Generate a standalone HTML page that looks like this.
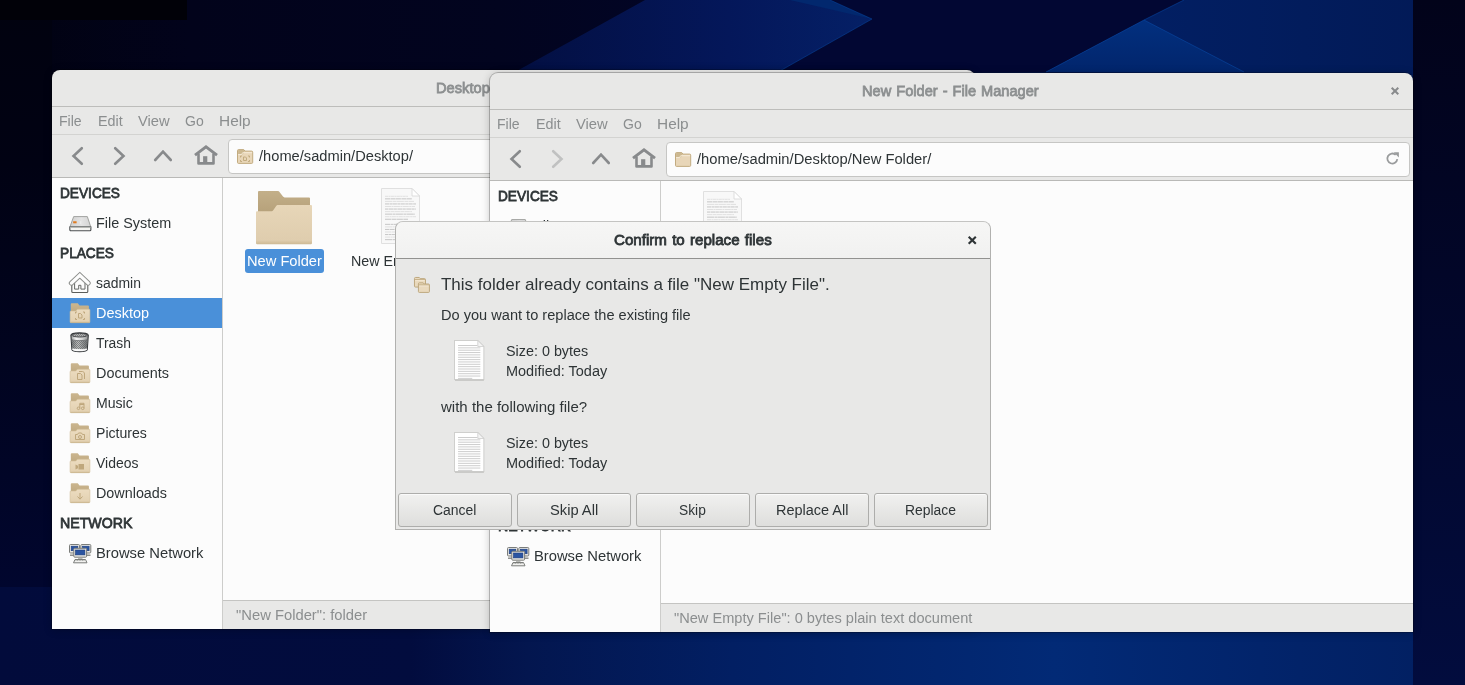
<!DOCTYPE html>
<html lang="en">
<head>
<meta charset="utf-8">
<title>File Manager</title>
<style>
*{box-sizing:border-box;margin:0;padding:0}
html,body{width:1465px;height:685px;overflow:hidden;background:#010733}
body{position:relative;font-family:"Liberation Sans","DejaVu Sans",sans-serif;font-size:15.5px;color:#2e3436}
#bg{position:absolute;left:0;top:0;width:1465px;height:685px}
.t{position:absolute;white-space:nowrap;line-height:20px;transform-origin:0 50%;font-size:15.5px}
.t.b{font-weight:normal;-webkit-text-stroke:.8px currentColor;word-spacing:1px}
.t.g{color:#8b8e8f}
.t.b.g{color:#8c8f90}
.t.w{color:#fff}
.win{will-change:transform;position:absolute;width:923px;height:559px;background:#e8e8e7;border-radius:8px 8px 0 0;overflow:hidden;box-shadow:0 0 0 1px rgba(0,0,0,.22),0 1px 9px rgba(0,0,0,.24)}
.win .title{position:absolute;left:0;top:0;width:100%;height:37px;border-bottom:1px solid #bdbdbb}
.menubar{position:absolute;left:0;top:37px;width:100%;height:28px;border-bottom:1px solid #d3d3d1}
.toolbar{position:absolute;left:0;top:65px;width:100%;height:43px;border-bottom:1px solid #b9b9b7}
.entry{position:absolute;left:176px;top:4px;height:35px;background:#fcfcfc;border:1px solid #c6c6c4;border-radius:4px}
.side{position:absolute;left:0;top:108px;width:171px;bottom:0;background:#fcfcfc;border-right:1px solid #cdcdcb}
.row{position:absolute;left:0;width:170px;height:30px}
.row.sel{background:#4a90d9}
.pane{position:absolute;left:171px;top:108px;right:0;bottom:29px;background:#fcfcfc}
.lblsel{position:absolute;background:#4a90d9;border-radius:3px}
.status{position:absolute;left:171px;right:0;bottom:0;height:29px;border-top:1px solid #c4c4c2;background:#e8e8e7}
.dlg{will-change:transform;position:absolute;left:395px;top:221px;width:596px;height:309px;background:#e8e8e7;border:1px solid #b1b1af;border-top-color:#c4c4c2;border-radius:8px 8px 0 0;overflow:hidden}
.dlg .dt{position:absolute;left:0;top:0;width:100%;height:37px;background:linear-gradient(#f6f6f5,#f1f1f0);border-bottom:1px solid #929290}
.btn{position:absolute;top:271px;width:114px;height:34px;border:1px solid #adadab;border-radius:3px;background:linear-gradient(#f1f1f0,#dededc);box-shadow:inset 0 1px #fafafa}

</style>
</head>
<body>
<svg id="bg" viewBox="0 0 1465 685">
<defs>
<linearGradient id="bgA" x1="0" y1="0" x2="1" y2="0"><stop offset="0" stop-color="#010211"/><stop offset=".13" stop-color="#02031b"/><stop offset=".34" stop-color="#02041f"/><stop offset=".6" stop-color="#02062c"/><stop offset=".78" stop-color="#021f63"/><stop offset="1" stop-color="#021955"/></linearGradient>
<linearGradient id="bgB" x1="0" y1="0" x2="1" y2="0"><stop offset="0" stop-color="#020b3b"/><stop offset=".28" stop-color="#020c3e"/><stop offset=".36" stop-color="#03164f"/><stop offset=".5" stop-color="#021f63"/><stop offset=".72" stop-color="#022a76"/><stop offset=".86" stop-color="#02246b"/><stop offset="1" stop-color="#021f60"/></linearGradient>
<linearGradient id="bgL" x1="0" y1="0" x2="0" y2="1"><stop offset="0" stop-color="#01020f"/><stop offset=".28" stop-color="#010213"/><stop offset=".6" stop-color="#01041f"/><stop offset="1" stop-color="#01062e"/></linearGradient>
<linearGradient id="bgR" x1="0" y1="0" x2="0" y2="1"><stop offset="0" stop-color="#02031a"/><stop offset=".4" stop-color="#020628"/><stop offset="1" stop-color="#020c3e"/></linearGradient>
<linearGradient id="bgM" x1="0" y1="0" x2="1" y2="0"><stop offset="0" stop-color="#030f42"/><stop offset=".6" stop-color="#04175a"/><stop offset="1" stop-color="#052066"/></linearGradient>
<linearGradient id="bgT" x1="0" y1="0" x2="0" y2="1"><stop offset="0" stop-color="#02307f"/><stop offset="1" stop-color="#02256c"/></linearGradient>
</defs>
<rect width="1465" height="340" fill="url(#bgA)"/>
<rect y="340" width="1465" height="345" fill="url(#bgB)"/>
<polygon points="645,0 830,0 872,19 778,72 515,72" fill="url(#bgM)"/>
<polygon points="790,0 830,0 872,19" fill="#02286e"/>
<polygon points="830,0 1184,0 1144,20 1046,72 778,72 872,19" fill="#020733"/>
<polygon points="1144,20 1244,72 1046,72" fill="url(#bgT)"/>
<path d="M872 19L778 72M1144 20L1046 72M1144 20L1244 72M1144 20L1184 0M872 19L830 0" stroke="#0a4aa8" stroke-width="1" fill="none" opacity=".55"/>
<rect x="0" y="0" width="52" height="587" fill="url(#bgL)"/>
<rect x="1413" y="0" width="52" height="685" fill="url(#bgR)"/>
<rect x="0" y="0" width="187" height="20" fill="#010108"/>
</svg>

<div class="win" id="w1" style="left:52px;top:70px">
<div class="title"><span class="t b g" id="t3" style="left:383.7px;top:8.0px;transform:scaleX(0.9470)">Desktop - File Manager</span><svg style="position:absolute;left:901px;top:14px;overflow:visible" width="8" height="8" viewBox="0 0 8 8" ><path d="M.7.700l6.6 6.6M7.3 .7l-6.6 6.6" stroke="#888a8c" stroke-width="2" fill="none"/></svg></div>
<div class="menubar"><span class="t g" id="t4" style="left:7.4px;top:4.0px;transform:scaleX(0.9086)">File</span><span class="t g" id="t5" style="left:46.4px;top:4.0px;transform:scaleX(0.9244)">Edit</span><span class="t g" id="t6" style="left:86.4px;top:4.0px;transform:scaleX(0.9511)">View</span><span class="t g" id="t7" style="left:133.4px;top:4.0px;transform:scaleX(0.9039)">Go</span><span class="t g" id="t8" style="left:167.4px;top:4.0px;transform:scaleX(0.9940)">Help</span></div>
<div class="toolbar">
<svg style="position:absolute;left:19px;top:11px;overflow:visible" width="14" height="20" viewBox="0 0 14 20" ><path d="M10.800 2.200l-8.300 7.800 8.300 7.800" fill="none" stroke="#888a8c" stroke-width="2.600" stroke-linecap="round" stroke-linejoin="miter"/></svg><svg style="position:absolute;left:59.5px;top:11px;overflow:visible" width="14" height="20" viewBox="0 0 14 20" ><path d="M3.200 2.200l8.300 7.800-8.300 7.800" fill="none" stroke="#888a8c" stroke-width="2.600" stroke-linecap="round" stroke-linejoin="miter"/></svg><svg style="position:absolute;left:101px;top:13.8px;overflow:visible" width="20" height="14" viewBox="0 0 20 14" ><path d="M2.200 11l7.800-8.300 7.800 8.300" fill="none" stroke="#888a8c" stroke-width="2.600" stroke-linecap="round" stroke-linejoin="miter"/></svg><svg style="position:absolute;left:141px;top:9px;overflow:visible" width="26" height="22" viewBox="0 0 26 22" ><path d="M2 11.200L13 2.900L24 11.200" fill="none" stroke="#888a8c" stroke-width="2.900" stroke-linecap="butt" stroke-linejoin="miter"/><path d="M5.500 9.500V19.400H20.500V9.500" fill="none" stroke="#888a8c" stroke-width="2.600" stroke-linejoin="round"/><rect x="10.100" y="12.200" width="4.200" height="7" fill="#888a8c"/></svg>
<div class="entry" style="width:760px"><svg style="position:absolute;left:7.7px;top:8.8px;overflow:visible" width="16.2" height="15.2" viewBox="0 0 16.200 15.200" ><path d="M1.500 .6h5.300l1.200 1.500h6.700a1 1 0 0 1 1 1v10.300a1 1 0 0 1-1 1h-13.200a1 1 0 0 1-1-1v-11.800a1 1 0 0 1 1-1z" fill="#e8d6b8" stroke="#c2ab80" stroke-width="1"/><path d="M1.100 1.100h5.500l1.100 1.500-1.800 2.700h-4.800z" fill="#ccb890"/><path d="M1.100 5.600h3.400l1.200-1.900h9.400" fill="none" stroke="#f7eedc" stroke-width=".9"/><g fill="none" stroke="#c2ab80" stroke-width="1"><path d="M3.500 8.500v-1.500h1.500M11 7h1.500v1.500M12.500 11v1.500h-1.500M5 12.500h-1.500v-1.500"/><path d="M6.500 8h2l1 1v2.500h-3z"/></g></svg></div>
<span class="t " id="t9" style="left:207.1px;top:11.0px;transform:scaleX(0.9458)">/home/sadmin/Desktop/</span>
</div>
<div class="side">
<div class="row" style="top:0px">
<span class="t b" id="t10" style="left:7.7px;top:5.0px;transform:scaleX(0.8815)">DEVICES</span>
</div>
<div class="row" style="top:30px">
<svg style="position:absolute;left:16.8px;top:7.7px;overflow:visible" width="22.7" height="15.4" viewBox="0 0 22.200 15.200" ><defs><linearGradient id="g1" x1="0" y1="0" x2="1" y2="0"><stop offset="0" stop-color="#cfcfcf"/><stop offset=".55" stop-color="#e4e4e4"/><stop offset="1" stop-color="#d4d4d4"/></linearGradient></defs>
<path d="M4.500.6h13.500l3.400 10.200h-20.600z" fill="url(#g1)" stroke="#9a9b98" stroke-width=".9"/>
<path d="M.7 10.800h20.800v2.800a1 1 0 0 1-1 1h-18.800a1 1 0 0 1-1-1z" fill="#f4f4f2" stroke="#4d5052" stroke-width="1.100"/>
<path d="M1 11.400h20.200" stroke="#b8b9b5" stroke-width="1"/>
<rect x="4" y="5.200" width="3.400" height="2" fill="#e07a1f"/>
<path d="M11.500 5v3" stroke="#f2f2f2" stroke-width=".8"/></svg>
<span class="t " id="t11" style="left:43.7px;top:5.0px;transform:scaleX(0.9288)">File System</span>
</div>
<div class="row" style="top:60px">
<span class="t b" id="t12" style="left:7.7px;top:5.0px;transform:scaleX(0.8828)">PLACES</span>
</div>
<div class="row" style="top:90px">
<svg style="position:absolute;left:16.8px;top:3.7px;overflow:visible" width="21.6" height="21.5" viewBox="0 0 21.600 21.500" ><path d="M2.800 10.500V19.500a1 1 0 0 0 1 1H17.800a1 1 0 0 0 1-1V10.500" fill="#fbfbfb" stroke="#5b5d5a" stroke-width="1.100"/>
<path d="M5.600 11V17.100H9.700V13.300H11.900V17.100H16V11" fill="#fcfcfc" stroke="#666865" stroke-width="1"/>
<path d="M2.400 11.100L10.800 3.300L19.200 11.100" fill="none" stroke="#8d8f8c" stroke-width="5.200" stroke-linecap="round" stroke-linejoin="miter"/>
<path d="M2.400 11.100L10.800 3.300L19.200 11.100" fill="none" stroke="#fdfdfd" stroke-width="3.200" stroke-linecap="round" stroke-linejoin="miter"/></svg>
<span class="t " id="t13" style="left:43.7px;top:5.0px;transform:scaleX(0.8986)">sadmin</span>
</div>
<div class="row sel" style="top:120px">
<svg style="position:absolute;left:18px;top:5px;overflow:visible" width="20" height="20" viewBox="0 0 20 20" ><defs><linearGradient id="g2" x1="0" y1="0" x2="0" y2="1"><stop offset="0" stop-color="#cbb68f"/><stop offset="1" stop-color="#bba57c"/></linearGradient>
<linearGradient id="g3" x1="0" y1="0" x2="0" y2="1"><stop offset="0" stop-color="#ecdcc0"/><stop offset="1" stop-color="#e2d0b0"/></linearGradient></defs>
<path d="M1.700 .3h6.100l1.700 2.100h8.500a.9.900 0 0 1 .9.900v9h-18.100v-11.100a.9.900 0 0 1 .9-.9z" fill="url(#g2)"/>
<path d="M.9 8h4.900l1.600-1.800h11.700a.8.800 0 0 1 .8.800v11.900a.8.800 0 0 1-.8.800h-18.200a.8.800 0 0 1-.8-.8v-10.100a.8.800 0 0 1 .8-.8z" fill="url(#g3)" stroke="#d2bd97" stroke-width=".6"/>
<path d="M.6 19.300h18.800" stroke="#c9b48c" stroke-width=".9"/>
<g fill="none" stroke="#bfa77c" stroke-width="1"><path d="M5.5 10.5v-1.5h1.5M13 9h1.5v1.5M14.500 15v1.500h-1.5M7 16.500h-1.5v-1.5" stroke-dasharray="none"/><path d="M8.5 10.500h2l1.500 1.500v3h-3.500z"/></g></svg>
<span class="t w" id="t14" style="left:43.7px;top:5.0px;transform:scaleX(0.9319)">Desktop</span>
</div>
<div class="row" style="top:150px">
<svg style="position:absolute;left:18px;top:4px;overflow:visible" width="19.2" height="20.5" viewBox="0 0 19 20.500" ><defs><linearGradient id="g4" x1="0" y1="0" x2="1" y2="0"><stop offset="0" stop-color="#9a9c9c"/><stop offset=".3" stop-color="#f4f4f4"/><stop offset=".65" stop-color="#d4d5d5"/><stop offset="1" stop-color="#8a8c8c"/></linearGradient>
<linearGradient id="g6" x1="0" y1="0" x2="1" y2="0"><stop offset="0" stop-color="#777a7b"/><stop offset=".4" stop-color="#c9caca"/><stop offset="1" stop-color="#6f7273"/></linearGradient>
<pattern id="p5" width="2" height="2" patternUnits="userSpaceOnUse"><rect width="1" height="1" fill="#5d6061" fill-opacity=".75"/><rect x="1" y="1" width="1" height="1" fill="#5d6061" fill-opacity=".75"/></pattern></defs>
<path d="M.8 3.200c0-3.300 17.400-3.300 17.400 0l-1 14.300c-.3 3-15.100 3-15.400 0z" fill="url(#g4)" stroke="#34373a" stroke-width="1.100"/>
<path d="M1.600 8c3.200 1.200 12.600 1.200 15.800 0l-.6 8c-3 1.300-11.600 1.300-14.600 0z" fill="url(#g6)"/>
<path d="M1.600 8c3.200 1.200 12.600 1.200 15.800 0l-.6 8c-3 1.300-11.600 1.300-14.600 0z" fill="url(#p5)"/>
<ellipse cx="9.500" cy="3.200" rx="7.700" ry="1.800" fill="#b9baba" stroke="#34373a" stroke-width=".9"/>
<ellipse cx="9.500" cy="3.200" rx="7.300" ry="1.500" fill="url(#p5)"/>
<path d="M1.500 7.600c3.200 1.300 12.800 1.300 16 0" fill="none" stroke="#55585a" stroke-width=".7"/>
<path d="M2.300 17.100c2.500 1.500 11.900 1.500 14.400 0" fill="none" stroke="#fafafa" stroke-width="1.300"/></svg>
<span class="t " id="t15" style="left:43.7px;top:5.0px;transform:scaleX(0.8938)">Trash</span>
</div>
<div class="row" style="top:180px">
<svg style="position:absolute;left:18px;top:5px;overflow:visible" width="20" height="20" viewBox="0 0 20 20" ><defs><linearGradient id="g7" x1="0" y1="0" x2="0" y2="1"><stop offset="0" stop-color="#cbb68f"/><stop offset="1" stop-color="#bba57c"/></linearGradient>
<linearGradient id="g8" x1="0" y1="0" x2="0" y2="1"><stop offset="0" stop-color="#ecdcc0"/><stop offset="1" stop-color="#e2d0b0"/></linearGradient></defs>
<path d="M1.700 .3h6.100l1.700 2.100h8.500a.9.900 0 0 1 .9.900v9h-18.100v-11.100a.9.900 0 0 1 .9-.9z" fill="url(#g7)"/>
<path d="M.9 8h4.900l1.600-1.800h11.700a.8.800 0 0 1 .8.800v11.900a.8.800 0 0 1-.8.800h-18.200a.8.800 0 0 1-.8-.8v-10.100a.8.800 0 0 1 .8-.8z" fill="url(#g8)" stroke="#d2bd97" stroke-width=".6"/>
<path d="M.6 19.300h18.800" stroke="#c9b48c" stroke-width=".9"/>
<g fill="none" stroke="#bfa77c" stroke-width="1"><path d="M7.500 10.500h3l1.500 1.500v4.500h-4.500z"/><path d="M9 8.500h3.500c1 0 2 1 2 2.500v5"/></g></svg>
<span class="t " id="t16" style="left:43.7px;top:5.0px;transform:scaleX(0.9298)">Documents</span>
</div>
<div class="row" style="top:210px">
<svg style="position:absolute;left:18px;top:5px;overflow:visible" width="20" height="20" viewBox="0 0 20 20" ><defs><linearGradient id="g9" x1="0" y1="0" x2="0" y2="1"><stop offset="0" stop-color="#cbb68f"/><stop offset="1" stop-color="#bba57c"/></linearGradient>
<linearGradient id="g10" x1="0" y1="0" x2="0" y2="1"><stop offset="0" stop-color="#ecdcc0"/><stop offset="1" stop-color="#e2d0b0"/></linearGradient></defs>
<path d="M1.700 .3h6.100l1.700 2.100h8.500a.9.900 0 0 1 .9.900v9h-18.100v-11.100a.9.900 0 0 1 .9-.9z" fill="url(#g9)"/>
<path d="M.9 8h4.900l1.600-1.800h11.700a.8.800 0 0 1 .8.800v11.900a.8.800 0 0 1-.8.800h-18.200a.8.800 0 0 1-.8-.8v-10.100a.8.800 0 0 1 .8-.8z" fill="url(#g10)" stroke="#d2bd97" stroke-width=".6"/>
<path d="M.6 19.300h18.800" stroke="#c9b48c" stroke-width=".9"/>
<g fill="none" stroke="#bfa77c" stroke-width="1"><circle cx="8.500" cy="15.300" r="1.300"/><circle cx="12.700" cy="15.300" r="1.300"/><path d="M9.800 15.300v-5h4.200v5M9.800 11.500h4.200"/></g></svg>
<span class="t " id="t17" style="left:43.7px;top:5.0px;transform:scaleX(0.9090)">Music</span>
</div>
<div class="row" style="top:240px">
<svg style="position:absolute;left:18px;top:5px;overflow:visible" width="20" height="20" viewBox="0 0 20 20" ><defs><linearGradient id="g11" x1="0" y1="0" x2="0" y2="1"><stop offset="0" stop-color="#cbb68f"/><stop offset="1" stop-color="#bba57c"/></linearGradient>
<linearGradient id="g12" x1="0" y1="0" x2="0" y2="1"><stop offset="0" stop-color="#ecdcc0"/><stop offset="1" stop-color="#e2d0b0"/></linearGradient></defs>
<path d="M1.700 .3h6.100l1.700 2.100h8.500a.9.900 0 0 1 .9.900v9h-18.100v-11.100a.9.900 0 0 1 .9-.9z" fill="url(#g11)"/>
<path d="M.9 8h4.900l1.600-1.800h11.700a.8.800 0 0 1 .8.800v11.900a.8.800 0 0 1-.8.800h-18.200a.8.800 0 0 1-.8-.8v-10.100a.8.800 0 0 1 .8-.8z" fill="url(#g12)" stroke="#d2bd97" stroke-width=".6"/>
<path d="M.6 19.300h18.800" stroke="#c9b48c" stroke-width=".9"/>
<g fill="none" stroke="#bfa77c" stroke-width="1"><path d="M5.500 11.500h2l1-1.500h3l1 1.500h2v5h-9z"/><circle cx="10" cy="14" r="1.500"/></g></svg>
<span class="t " id="t18" style="left:43.7px;top:5.0px;transform:scaleX(0.9089)">Pictures</span>
</div>
<div class="row" style="top:270px">
<svg style="position:absolute;left:18px;top:5px;overflow:visible" width="20" height="20" viewBox="0 0 20 20" ><defs><linearGradient id="g13" x1="0" y1="0" x2="0" y2="1"><stop offset="0" stop-color="#cbb68f"/><stop offset="1" stop-color="#bba57c"/></linearGradient>
<linearGradient id="g14" x1="0" y1="0" x2="0" y2="1"><stop offset="0" stop-color="#ecdcc0"/><stop offset="1" stop-color="#e2d0b0"/></linearGradient></defs>
<path d="M1.700 .3h6.100l1.700 2.100h8.500a.9.900 0 0 1 .9.900v9h-18.100v-11.100a.9.900 0 0 1 .9-.9z" fill="url(#g13)"/>
<path d="M.9 8h4.900l1.600-1.800h11.700a.8.800 0 0 1 .8.800v11.900a.8.800 0 0 1-.8.800h-18.200a.8.800 0 0 1-.8-.8v-10.100a.8.800 0 0 1 .8-.8z" fill="url(#g14)" stroke="#d2bd97" stroke-width=".6"/>
<path d="M.6 19.300h18.800" stroke="#c9b48c" stroke-width=".9"/>
<g fill="#bfa77c" stroke="none"><rect x="8.500" y="11" width="5.500" height="5.500"/><path d="M5.500 11.500l2.500 1.200v2.600l-2.500 1.200z"/></g></svg>
<span class="t " id="t19" style="left:43.7px;top:5.0px;transform:scaleX(0.8997)">Videos</span>
</div>
<div class="row" style="top:300px">
<svg style="position:absolute;left:18px;top:5px;overflow:visible" width="20" height="20" viewBox="0 0 20 20" ><defs><linearGradient id="g15" x1="0" y1="0" x2="0" y2="1"><stop offset="0" stop-color="#cbb68f"/><stop offset="1" stop-color="#bba57c"/></linearGradient>
<linearGradient id="g16" x1="0" y1="0" x2="0" y2="1"><stop offset="0" stop-color="#ecdcc0"/><stop offset="1" stop-color="#e2d0b0"/></linearGradient></defs>
<path d="M1.700 .3h6.100l1.700 2.100h8.500a.9.900 0 0 1 .9.900v9h-18.100v-11.100a.9.900 0 0 1 .9-.9z" fill="url(#g15)"/>
<path d="M.9 8h4.900l1.600-1.800h11.700a.8.800 0 0 1 .8.800v11.900a.8.800 0 0 1-.8.800h-18.200a.8.800 0 0 1-.8-.8v-10.100a.8.800 0 0 1 .8-.8z" fill="url(#g16)" stroke="#d2bd97" stroke-width=".6"/>
<path d="M.6 19.300h18.800" stroke="#c9b48c" stroke-width=".9"/>
<g fill="none" stroke="#bfa77c" stroke-width="1"><path d="M10 10v6M7.500 13.500l2.500 2.700 2.500-2.700"/></g></svg>
<span class="t " id="t20" style="left:43.7px;top:5.0px;transform:scaleX(0.9258)">Downloads</span>
</div>
<div class="row" style="top:330px">
<span class="t b" id="t21" style="left:7.7px;top:5.0px;transform:scaleX(0.9139)">NETWORK</span>
</div>
<div class="row" style="top:360px">
<svg style="position:absolute;left:16.8px;top:5.8px;overflow:visible" width="22.5" height="19.5" viewBox="0 0 22.500 19.500" ><rect x="0.5" y="0.5" width="10" height="8.5" rx="1" fill="#e6e6e4" stroke="#7b7d7a" stroke-width="1"/><rect x="2.2" y="2.2" width="6.6" height="4.5" fill="#2b55a2" stroke="#1c3c7c" stroke-width=".6"/><path d="M1 11.200h9" stroke="#7b7d7a" stroke-width="1.300"/><rect x="11.8" y="0.5" width="10" height="8.5" rx="1" fill="#e6e6e4" stroke="#7b7d7a" stroke-width="1"/><rect x="13.5" y="2.2" width="6.6" height="4.5" fill="#2b55a2" stroke="#1c3c7c" stroke-width=".6"/><path d="M12.500 11.200h9" stroke="#7b7d7a" stroke-width="1.300"/><rect x="4.8" y="4.3" width="12.8" height="8.9" rx="1" fill="#e6e6e4" stroke="#7b7d7a" stroke-width="1"/><rect x="6.5" y="6.0" width="9.4" height="4.9" fill="#2b55a2" stroke="#1c3c7c" stroke-width=".6"/><path d="M9 14.300h4.500v1.200h-4.500z" fill="#9a9c99"/><path d="M6 15.500h10.500l1.500 3.300h-13.500z" fill="#f2f2f0" stroke="#7b7d7a" stroke-width="1"/><path d="M6.500 16.300h9.500" stroke="#8a8c89" stroke-width=".9" stroke-dasharray="1 .6"/></svg>
<span class="t " id="t22" style="left:43.7px;top:5.0px;transform:scaleX(0.9518)">Browse Network</span>
</div>
</div>
<div class="pane"><svg style="position:absolute;left:33px;top:13px;overflow:visible" width="56" height="54" viewBox="0 0 56 54" ><defs><linearGradient id="g17" x1="0" y1="0" x2="0" y2="1"><stop offset="0" stop-color="#c3af89"/><stop offset="1" stop-color="#b5a079"/></linearGradient>
<linearGradient id="g18" x1="0" y1="0" x2="0" y2="1"><stop offset="0" stop-color="#e7d6b8"/><stop offset=".9" stop-color="#dfcdae"/><stop offset="1" stop-color="#cdb994"/></linearGradient></defs>
<path d="M3 0h18.500c1 0 1.500.4 2 1l3.500 4.600c.4.500.8.800 1.600.8h24.400a1 1 0 0 1 1 1v16h-52v-22.400a1 1 0 0 1 1-1z" fill="url(#g17)"/>
<path d="M1 20.300h14.300c.9 0 1.400-.3 1.900-1l3-4.400c.5-.7 1-1 1.900-1h32.900a1 1 0 0 1 1 1v37.100a1.200 1.200 0 0 1-1.200 1.200h-53.600a1.200 1.200 0 0 1-1.200-1.200v-30.700a1 1 0 0 1 1-1z" fill="url(#g18)"/></svg><div class="lblsel" style="left:22px;top:71px;width:79px;height:24px"></div><span class="t w" id="t1" style="left:24.0px;top:73.0px;transform:scaleX(0.9451)">New Folder</span><svg style="position:absolute;left:158.3px;top:9.8px;overflow:visible" width="39" height="56" viewBox="0 0 39 56" ><path d="M.5.500h30.500l7.500 7.500v47.500h-38z" fill="#f8f8f8" stroke="#e0e0e0" stroke-width="1"/><path d="M31 .5v7.500h7.500z" fill="#ffffff" stroke="#d6d6d6" stroke-width=".8"/><path d="M4 8.30h23" stroke="#d6d6d6" stroke-width=".7" stroke-dasharray="3 .5 2 .4"/><path d="M4 10.85h27" stroke="#b0b0b0" stroke-width=".7" stroke-dasharray="5 .5 5 .4"/><path d="M4 13.40h29" stroke="#d6d6d6" stroke-width=".7" stroke-dasharray="7 .5 4 .4"/><path d="M4 15.95h31" stroke="#b0b0b0" stroke-width=".7" stroke-dasharray="4 .5 3 .4"/><path d="M4 18.50h30" stroke="#d6d6d6" stroke-width=".7" stroke-dasharray="6 .5 2 .4"/><path d="M4 21.05h31" stroke="#b0b0b0" stroke-width=".7" stroke-dasharray="3 .5 5 .4"/><path d="M4 23.60h27" stroke="#d6d6d6" stroke-width=".7" stroke-dasharray="5 .5 4 .4"/><path d="M4 26.15h30" stroke="#b0b0b0" stroke-width=".7" stroke-dasharray="7 .5 3 .4"/><path d="M4 28.70h31" stroke="#d6d6d6" stroke-width=".7" stroke-dasharray="4 .5 2 .4"/><path d="M4 31.25h23" stroke="#b0b0b0" stroke-width=".7" stroke-dasharray="6 .5 5 .4"/><path d="M4 36.35h31" stroke="#b0b0b0" stroke-width=".7" stroke-dasharray="5 .5 3 .4"/><path d="M4 38.90h29" stroke="#d6d6d6" stroke-width=".7" stroke-dasharray="7 .5 2 .4"/><path d="M4 41.45h27" stroke="#b0b0b0" stroke-width=".7" stroke-dasharray="4 .5 5 .4"/><path d="M4 44.00h30" stroke="#d6d6d6" stroke-width=".7" stroke-dasharray="6 .5 4 .4"/><path d="M4 46.55h24" stroke="#b0b0b0" stroke-width=".7" stroke-dasharray="3 .5 3 .4"/><path d="M4 49.10h31" stroke="#d6d6d6" stroke-width=".7" stroke-dasharray="5 .5 2 .4"/><path d="M4 51.65h28" stroke="#b0b0b0" stroke-width=".7" stroke-dasharray="7 .5 5 .4"/></svg><span class="t " id="t2" style="left:127.8px;top:73.0px;transform:scaleX(0.9196)">New Empty File</span></div>
<div class="status"><span class="t g" id="t23" style="left:13.4px;top:4.0px;transform:scaleX(0.9532)">"New Folder": folder</span></div>
</div>
<div class="win" id="w2" style="left:490px;top:73px">
<div class="title"><span class="t b g" id="t25" style="left:372.4px;top:8.0px;transform:scaleX(0.9425)">New Folder - File Manager</span><svg style="position:absolute;left:901px;top:14px;overflow:visible" width="8" height="8" viewBox="0 0 8 8" ><path d="M.7.700l6.6 6.6M7.3 .7l-6.6 6.6" stroke="#888a8c" stroke-width="2" fill="none"/></svg></div>
<div class="menubar"><span class="t g" id="t26" style="left:7.4px;top:4.0px;transform:scaleX(0.9086)">File</span><span class="t g" id="t27" style="left:46.4px;top:4.0px;transform:scaleX(0.9244)">Edit</span><span class="t g" id="t28" style="left:86.4px;top:4.0px;transform:scaleX(0.9511)">View</span><span class="t g" id="t29" style="left:133.4px;top:4.0px;transform:scaleX(0.9039)">Go</span><span class="t g" id="t30" style="left:167.4px;top:4.0px;transform:scaleX(0.9940)">Help</span></div>
<div class="toolbar">
<svg style="position:absolute;left:19px;top:11px;overflow:visible" width="14" height="20" viewBox="0 0 14 20" ><path d="M10.800 2.200l-8.300 7.800 8.300 7.800" fill="none" stroke="#888a8c" stroke-width="2.600" stroke-linecap="round" stroke-linejoin="miter"/></svg><svg style="position:absolute;left:59.5px;top:11px;overflow:visible" width="14" height="20" viewBox="0 0 14 20" ><path d="M3.200 2.200l8.300 7.800-8.300 7.800" fill="none" stroke="#c0c1c1" stroke-width="2.600" stroke-linecap="round" stroke-linejoin="miter"/></svg><svg style="position:absolute;left:101px;top:13.8px;overflow:visible" width="20" height="14" viewBox="0 0 20 14" ><path d="M2.200 11l7.800-8.300 7.800 8.300" fill="none" stroke="#888a8c" stroke-width="2.600" stroke-linecap="round" stroke-linejoin="miter"/></svg><svg style="position:absolute;left:141px;top:9px;overflow:visible" width="26" height="22" viewBox="0 0 26 22" ><path d="M2 11.200L13 2.900L24 11.200" fill="none" stroke="#888a8c" stroke-width="2.900" stroke-linecap="butt" stroke-linejoin="miter"/><path d="M5.500 9.500V19.400H20.500V9.500" fill="none" stroke="#888a8c" stroke-width="2.600" stroke-linejoin="round"/><rect x="10.100" y="12.200" width="4.200" height="7" fill="#888a8c"/></svg>
<div class="entry" style="width:744px"><svg style="position:absolute;left:7.7px;top:8.8px;overflow:visible" width="16.2" height="15.2" viewBox="0 0 16.200 15.200" ><path d="M1.500 .6h5.300l1.200 1.500h6.700a1 1 0 0 1 1 1v10.300a1 1 0 0 1-1 1h-13.200a1 1 0 0 1-1-1v-11.800a1 1 0 0 1 1-1z" fill="#e8d6b8" stroke="#c2ab80" stroke-width="1"/><path d="M1.100 1.100h5.500l1.100 1.500-1.800 2.700h-4.800z" fill="#ccb890"/><path d="M1.100 5.600h3.400l1.200-1.900h9.400" fill="none" stroke="#f7eedc" stroke-width=".9"/></svg><svg style="position:absolute;left:719px;top:9px;overflow:visible" width="13" height="13" viewBox="0 0 13 13" ><path d="M11.300 7.200a5 5 0 1 1-1.600-4.400" fill="none" stroke="#9a9c9d" stroke-width="1.800"/><path d="M7.700 .3h5.200v5.200z" fill="#9a9c9d"/></svg></div>
<span class="t " id="t31" style="left:207.1px;top:11.0px;transform:scaleX(0.9509)">/home/sadmin/Desktop/New Folder/</span>
</div>
<div class="side">
<div class="row" style="top:0px">
<span class="t b" id="t32" style="left:7.7px;top:5.0px;transform:scaleX(0.8815)">DEVICES</span>
</div>
<div class="row" style="top:30px">
<svg style="position:absolute;left:16.8px;top:7.7px;overflow:visible" width="22.7" height="15.4" viewBox="0 0 22.200 15.200" ><defs><linearGradient id="g19" x1="0" y1="0" x2="1" y2="0"><stop offset="0" stop-color="#cfcfcf"/><stop offset=".55" stop-color="#e4e4e4"/><stop offset="1" stop-color="#d4d4d4"/></linearGradient></defs>
<path d="M4.500.6h13.500l3.400 10.200h-20.600z" fill="url(#g19)" stroke="#9a9b98" stroke-width=".9"/>
<path d="M.7 10.800h20.800v2.800a1 1 0 0 1-1 1h-18.800a1 1 0 0 1-1-1z" fill="#f4f4f2" stroke="#4d5052" stroke-width="1.100"/>
<path d="M1 11.400h20.200" stroke="#b8b9b5" stroke-width="1"/>
<rect x="4" y="5.200" width="3.400" height="2" fill="#e07a1f"/>
<path d="M11.500 5v3" stroke="#f2f2f2" stroke-width=".8"/></svg>
<span class="t " id="t33" style="left:43.7px;top:5.0px;transform:scaleX(0.9288)">File System</span>
</div>
<div class="row" style="top:60px">
<span class="t b" id="t34" style="left:7.7px;top:5.0px;transform:scaleX(0.8828)">PLACES</span>
</div>
<div class="row" style="top:90px">
<svg style="position:absolute;left:16.8px;top:3.7px;overflow:visible" width="21.6" height="21.5" viewBox="0 0 21.600 21.500" ><path d="M2.800 10.500V19.500a1 1 0 0 0 1 1H17.800a1 1 0 0 0 1-1V10.500" fill="#fbfbfb" stroke="#5b5d5a" stroke-width="1.100"/>
<path d="M5.600 11V17.100H9.700V13.300H11.900V17.100H16V11" fill="#fcfcfc" stroke="#666865" stroke-width="1"/>
<path d="M2.400 11.100L10.800 3.300L19.200 11.100" fill="none" stroke="#8d8f8c" stroke-width="5.200" stroke-linecap="round" stroke-linejoin="miter"/>
<path d="M2.400 11.100L10.800 3.300L19.200 11.100" fill="none" stroke="#fdfdfd" stroke-width="3.200" stroke-linecap="round" stroke-linejoin="miter"/></svg>
<span class="t " id="t35" style="left:43.7px;top:5.0px;transform:scaleX(0.8986)">sadmin</span>
</div>
<div class="row" style="top:120px">
<svg style="position:absolute;left:18px;top:5px;overflow:visible" width="20" height="20" viewBox="0 0 20 20" ><defs><linearGradient id="g20" x1="0" y1="0" x2="0" y2="1"><stop offset="0" stop-color="#cbb68f"/><stop offset="1" stop-color="#bba57c"/></linearGradient>
<linearGradient id="g21" x1="0" y1="0" x2="0" y2="1"><stop offset="0" stop-color="#ecdcc0"/><stop offset="1" stop-color="#e2d0b0"/></linearGradient></defs>
<path d="M1.700 .3h6.100l1.700 2.100h8.500a.9.900 0 0 1 .9.900v9h-18.100v-11.100a.9.900 0 0 1 .9-.9z" fill="url(#g20)"/>
<path d="M.9 8h4.900l1.600-1.800h11.700a.8.800 0 0 1 .8.800v11.900a.8.800 0 0 1-.8.800h-18.200a.8.800 0 0 1-.8-.8v-10.100a.8.800 0 0 1 .8-.8z" fill="url(#g21)" stroke="#d2bd97" stroke-width=".6"/>
<path d="M.6 19.300h18.800" stroke="#c9b48c" stroke-width=".9"/>
<g fill="none" stroke="#bfa77c" stroke-width="1"><path d="M5.5 10.5v-1.5h1.5M13 9h1.5v1.5M14.500 15v1.500h-1.5M7 16.500h-1.5v-1.5" stroke-dasharray="none"/><path d="M8.5 10.500h2l1.500 1.500v3h-3.500z"/></g></svg>
<span class="t " id="t36" style="left:43.7px;top:5.0px;transform:scaleX(0.9319)">Desktop</span>
</div>
<div class="row" style="top:150px">
<svg style="position:absolute;left:18px;top:4px;overflow:visible" width="19.2" height="20.5" viewBox="0 0 19 20.500" ><defs><linearGradient id="g22" x1="0" y1="0" x2="1" y2="0"><stop offset="0" stop-color="#9a9c9c"/><stop offset=".3" stop-color="#f4f4f4"/><stop offset=".65" stop-color="#d4d5d5"/><stop offset="1" stop-color="#8a8c8c"/></linearGradient>
<linearGradient id="g24" x1="0" y1="0" x2="1" y2="0"><stop offset="0" stop-color="#777a7b"/><stop offset=".4" stop-color="#c9caca"/><stop offset="1" stop-color="#6f7273"/></linearGradient>
<pattern id="p23" width="2" height="2" patternUnits="userSpaceOnUse"><rect width="1" height="1" fill="#5d6061" fill-opacity=".75"/><rect x="1" y="1" width="1" height="1" fill="#5d6061" fill-opacity=".75"/></pattern></defs>
<path d="M.8 3.200c0-3.300 17.400-3.300 17.400 0l-1 14.300c-.3 3-15.100 3-15.400 0z" fill="url(#g22)" stroke="#34373a" stroke-width="1.100"/>
<path d="M1.600 8c3.200 1.200 12.600 1.200 15.800 0l-.6 8c-3 1.300-11.600 1.300-14.600 0z" fill="url(#g24)"/>
<path d="M1.600 8c3.200 1.200 12.600 1.200 15.800 0l-.6 8c-3 1.300-11.600 1.300-14.600 0z" fill="url(#p23)"/>
<ellipse cx="9.500" cy="3.200" rx="7.700" ry="1.800" fill="#b9baba" stroke="#34373a" stroke-width=".9"/>
<ellipse cx="9.500" cy="3.200" rx="7.300" ry="1.500" fill="url(#p23)"/>
<path d="M1.500 7.600c3.200 1.300 12.800 1.300 16 0" fill="none" stroke="#55585a" stroke-width=".7"/>
<path d="M2.300 17.100c2.500 1.500 11.900 1.500 14.400 0" fill="none" stroke="#fafafa" stroke-width="1.300"/></svg>
<span class="t " id="t37" style="left:43.7px;top:5.0px;transform:scaleX(0.8938)">Trash</span>
</div>
<div class="row" style="top:180px">
<svg style="position:absolute;left:18px;top:5px;overflow:visible" width="20" height="20" viewBox="0 0 20 20" ><defs><linearGradient id="g25" x1="0" y1="0" x2="0" y2="1"><stop offset="0" stop-color="#cbb68f"/><stop offset="1" stop-color="#bba57c"/></linearGradient>
<linearGradient id="g26" x1="0" y1="0" x2="0" y2="1"><stop offset="0" stop-color="#ecdcc0"/><stop offset="1" stop-color="#e2d0b0"/></linearGradient></defs>
<path d="M1.700 .3h6.100l1.700 2.100h8.500a.9.900 0 0 1 .9.900v9h-18.100v-11.100a.9.900 0 0 1 .9-.9z" fill="url(#g25)"/>
<path d="M.9 8h4.900l1.600-1.800h11.700a.8.800 0 0 1 .8.800v11.900a.8.800 0 0 1-.8.800h-18.200a.8.800 0 0 1-.8-.8v-10.100a.8.800 0 0 1 .8-.8z" fill="url(#g26)" stroke="#d2bd97" stroke-width=".6"/>
<path d="M.6 19.300h18.800" stroke="#c9b48c" stroke-width=".9"/>
<g fill="none" stroke="#bfa77c" stroke-width="1"><path d="M7.500 10.500h3l1.500 1.500v4.500h-4.500z"/><path d="M9 8.500h3.500c1 0 2 1 2 2.500v5"/></g></svg>
<span class="t " id="t38" style="left:43.7px;top:5.0px;transform:scaleX(0.9298)">Documents</span>
</div>
<div class="row" style="top:210px">
<svg style="position:absolute;left:18px;top:5px;overflow:visible" width="20" height="20" viewBox="0 0 20 20" ><defs><linearGradient id="g27" x1="0" y1="0" x2="0" y2="1"><stop offset="0" stop-color="#cbb68f"/><stop offset="1" stop-color="#bba57c"/></linearGradient>
<linearGradient id="g28" x1="0" y1="0" x2="0" y2="1"><stop offset="0" stop-color="#ecdcc0"/><stop offset="1" stop-color="#e2d0b0"/></linearGradient></defs>
<path d="M1.700 .3h6.100l1.700 2.100h8.500a.9.900 0 0 1 .9.900v9h-18.100v-11.100a.9.900 0 0 1 .9-.9z" fill="url(#g27)"/>
<path d="M.9 8h4.900l1.600-1.800h11.700a.8.800 0 0 1 .8.800v11.900a.8.800 0 0 1-.8.800h-18.200a.8.800 0 0 1-.8-.8v-10.100a.8.800 0 0 1 .8-.8z" fill="url(#g28)" stroke="#d2bd97" stroke-width=".6"/>
<path d="M.6 19.300h18.800" stroke="#c9b48c" stroke-width=".9"/>
<g fill="none" stroke="#bfa77c" stroke-width="1"><circle cx="8.500" cy="15.300" r="1.300"/><circle cx="12.700" cy="15.300" r="1.300"/><path d="M9.800 15.300v-5h4.200v5M9.800 11.500h4.200"/></g></svg>
<span class="t " id="t39" style="left:43.7px;top:5.0px;transform:scaleX(0.9090)">Music</span>
</div>
<div class="row" style="top:240px">
<svg style="position:absolute;left:18px;top:5px;overflow:visible" width="20" height="20" viewBox="0 0 20 20" ><defs><linearGradient id="g29" x1="0" y1="0" x2="0" y2="1"><stop offset="0" stop-color="#cbb68f"/><stop offset="1" stop-color="#bba57c"/></linearGradient>
<linearGradient id="g30" x1="0" y1="0" x2="0" y2="1"><stop offset="0" stop-color="#ecdcc0"/><stop offset="1" stop-color="#e2d0b0"/></linearGradient></defs>
<path d="M1.700 .3h6.100l1.700 2.100h8.500a.9.900 0 0 1 .9.900v9h-18.100v-11.100a.9.900 0 0 1 .9-.9z" fill="url(#g29)"/>
<path d="M.9 8h4.900l1.600-1.800h11.700a.8.800 0 0 1 .8.800v11.900a.8.800 0 0 1-.8.800h-18.200a.8.800 0 0 1-.8-.8v-10.100a.8.800 0 0 1 .8-.8z" fill="url(#g30)" stroke="#d2bd97" stroke-width=".6"/>
<path d="M.6 19.300h18.800" stroke="#c9b48c" stroke-width=".9"/>
<g fill="none" stroke="#bfa77c" stroke-width="1"><path d="M5.500 11.500h2l1-1.500h3l1 1.500h2v5h-9z"/><circle cx="10" cy="14" r="1.500"/></g></svg>
<span class="t " id="t40" style="left:43.7px;top:5.0px;transform:scaleX(0.9089)">Pictures</span>
</div>
<div class="row" style="top:270px">
<svg style="position:absolute;left:18px;top:5px;overflow:visible" width="20" height="20" viewBox="0 0 20 20" ><defs><linearGradient id="g31" x1="0" y1="0" x2="0" y2="1"><stop offset="0" stop-color="#cbb68f"/><stop offset="1" stop-color="#bba57c"/></linearGradient>
<linearGradient id="g32" x1="0" y1="0" x2="0" y2="1"><stop offset="0" stop-color="#ecdcc0"/><stop offset="1" stop-color="#e2d0b0"/></linearGradient></defs>
<path d="M1.700 .3h6.100l1.700 2.100h8.500a.9.900 0 0 1 .9.900v9h-18.100v-11.100a.9.900 0 0 1 .9-.9z" fill="url(#g31)"/>
<path d="M.9 8h4.900l1.600-1.800h11.700a.8.800 0 0 1 .8.800v11.900a.8.800 0 0 1-.8.800h-18.200a.8.800 0 0 1-.8-.8v-10.100a.8.800 0 0 1 .8-.8z" fill="url(#g32)" stroke="#d2bd97" stroke-width=".6"/>
<path d="M.6 19.300h18.800" stroke="#c9b48c" stroke-width=".9"/>
<g fill="#bfa77c" stroke="none"><rect x="8.500" y="11" width="5.500" height="5.500"/><path d="M5.500 11.500l2.500 1.200v2.600l-2.500 1.200z"/></g></svg>
<span class="t " id="t41" style="left:43.7px;top:5.0px;transform:scaleX(0.8997)">Videos</span>
</div>
<div class="row" style="top:300px">
<svg style="position:absolute;left:18px;top:5px;overflow:visible" width="20" height="20" viewBox="0 0 20 20" ><defs><linearGradient id="g33" x1="0" y1="0" x2="0" y2="1"><stop offset="0" stop-color="#cbb68f"/><stop offset="1" stop-color="#bba57c"/></linearGradient>
<linearGradient id="g34" x1="0" y1="0" x2="0" y2="1"><stop offset="0" stop-color="#ecdcc0"/><stop offset="1" stop-color="#e2d0b0"/></linearGradient></defs>
<path d="M1.700 .3h6.100l1.700 2.100h8.500a.9.900 0 0 1 .9.900v9h-18.100v-11.100a.9.900 0 0 1 .9-.9z" fill="url(#g33)"/>
<path d="M.9 8h4.900l1.600-1.800h11.700a.8.800 0 0 1 .8.800v11.900a.8.800 0 0 1-.8.800h-18.200a.8.800 0 0 1-.8-.8v-10.100a.8.800 0 0 1 .8-.8z" fill="url(#g34)" stroke="#d2bd97" stroke-width=".6"/>
<path d="M.6 19.300h18.800" stroke="#c9b48c" stroke-width=".9"/>
<g fill="none" stroke="#bfa77c" stroke-width="1"><path d="M10 10v6M7.500 13.500l2.500 2.700 2.500-2.700"/></g></svg>
<span class="t " id="t42" style="left:43.7px;top:5.0px;transform:scaleX(0.9258)">Downloads</span>
</div>
<div class="row" style="top:330px">
<span class="t b" id="t43" style="left:7.7px;top:5.0px;transform:scaleX(0.9139)">NETWORK</span>
</div>
<div class="row" style="top:360px">
<svg style="position:absolute;left:16.8px;top:5.8px;overflow:visible" width="22.5" height="19.5" viewBox="0 0 22.500 19.500" ><rect x="0.5" y="0.5" width="10" height="8.5" rx="1" fill="#e6e6e4" stroke="#7b7d7a" stroke-width="1"/><rect x="2.2" y="2.2" width="6.6" height="4.5" fill="#2b55a2" stroke="#1c3c7c" stroke-width=".6"/><path d="M1 11.200h9" stroke="#7b7d7a" stroke-width="1.300"/><rect x="11.8" y="0.5" width="10" height="8.5" rx="1" fill="#e6e6e4" stroke="#7b7d7a" stroke-width="1"/><rect x="13.5" y="2.2" width="6.6" height="4.5" fill="#2b55a2" stroke="#1c3c7c" stroke-width=".6"/><path d="M12.500 11.200h9" stroke="#7b7d7a" stroke-width="1.300"/><rect x="4.8" y="4.3" width="12.8" height="8.9" rx="1" fill="#e6e6e4" stroke="#7b7d7a" stroke-width="1"/><rect x="6.5" y="6.0" width="9.4" height="4.9" fill="#2b55a2" stroke="#1c3c7c" stroke-width=".6"/><path d="M9 14.300h4.500v1.200h-4.500z" fill="#9a9c99"/><path d="M6 15.500h10.500l1.500 3.300h-13.500z" fill="#f2f2f0" stroke="#7b7d7a" stroke-width="1"/><path d="M6.500 16.300h9.500" stroke="#8a8c89" stroke-width=".9" stroke-dasharray="1 .6"/></svg>
<span class="t " id="t44" style="left:43.7px;top:5.0px;transform:scaleX(0.9518)">Browse Network</span>
</div>
</div>
<div class="pane"><svg style="position:absolute;left:41.5px;top:9.8px;overflow:visible" width="39" height="56" viewBox="0 0 39 56" ><path d="M.5.500h30.500l7.500 7.500v47.500h-38z" fill="#f8f8f8" stroke="#e0e0e0" stroke-width="1"/><path d="M31 .5v7.500h7.500z" fill="#ffffff" stroke="#d6d6d6" stroke-width=".8"/><path d="M4 8.30h23" stroke="#d6d6d6" stroke-width=".7" stroke-dasharray="3 .5 2 .4"/><path d="M4 10.85h27" stroke="#b0b0b0" stroke-width=".7" stroke-dasharray="5 .5 5 .4"/><path d="M4 13.40h29" stroke="#d6d6d6" stroke-width=".7" stroke-dasharray="7 .5 4 .4"/><path d="M4 15.95h31" stroke="#b0b0b0" stroke-width=".7" stroke-dasharray="4 .5 3 .4"/><path d="M4 18.50h30" stroke="#d6d6d6" stroke-width=".7" stroke-dasharray="6 .5 2 .4"/><path d="M4 21.05h31" stroke="#b0b0b0" stroke-width=".7" stroke-dasharray="3 .5 5 .4"/><path d="M4 23.60h27" stroke="#d6d6d6" stroke-width=".7" stroke-dasharray="5 .5 4 .4"/><path d="M4 26.15h30" stroke="#b0b0b0" stroke-width=".7" stroke-dasharray="7 .5 3 .4"/><path d="M4 28.70h31" stroke="#d6d6d6" stroke-width=".7" stroke-dasharray="4 .5 2 .4"/><path d="M4 31.25h23" stroke="#b0b0b0" stroke-width=".7" stroke-dasharray="6 .5 5 .4"/><path d="M4 36.35h31" stroke="#b0b0b0" stroke-width=".7" stroke-dasharray="5 .5 3 .4"/><path d="M4 38.90h29" stroke="#d6d6d6" stroke-width=".7" stroke-dasharray="7 .5 2 .4"/><path d="M4 41.45h27" stroke="#b0b0b0" stroke-width=".7" stroke-dasharray="4 .5 5 .4"/><path d="M4 44.00h30" stroke="#d6d6d6" stroke-width=".7" stroke-dasharray="6 .5 4 .4"/><path d="M4 46.55h24" stroke="#b0b0b0" stroke-width=".7" stroke-dasharray="3 .5 3 .4"/><path d="M4 49.10h31" stroke="#d6d6d6" stroke-width=".7" stroke-dasharray="5 .5 2 .4"/><path d="M4 51.65h28" stroke="#b0b0b0" stroke-width=".7" stroke-dasharray="7 .5 5 .4"/></svg><div class="lblsel" style="left:10px;top:71px;width:103px;height:24px"></div><span class="t w" id="t24" style="left:10.9px;top:73.0px;transform:scaleX(0.9196)">New Empty File</span></div>
<div class="status"><span class="t g" id="t45" style="left:12.6px;top:4.0px;transform:scaleX(0.9418)">"New Empty File": 0 bytes plain text document</span></div>
</div>
<div class="dlg" id="dlg">
<div class="dt"><span class="t b" id="t46" style="left:217.8px;top:8.0px;transform:scaleX(0.9764)">Confirm to replace files</span><svg style="position:absolute;left:572px;top:13.8px;overflow:visible" width="8.5" height="8.5" viewBox="0 0 8.5 8.5" ><path d="M.7.700l7.1 7.1M7.8 .7l-7.1 7.1" stroke="#2e3436" stroke-width="2.1" fill="none"/></svg></div>
<svg style="position:absolute;left:18px;top:54.7px;overflow:visible" width="16.3" height="16.3" viewBox="0 0 17 17" ><path d="M0.5 1.5a1 1 0 0 1 1-1h4l1 1.200h4.500a1 1 0 0 1 1 1v6.800a1 1 0 0 1-1 1h-9.500a1 1 0 0 1-1-1z" fill="#e9d9bd" stroke="#bca67c" stroke-width="1"/><path d="M1 2.6h10.500" stroke="#c9b48d" stroke-width="1.200"/><path d="M1.2 3.8h10" stroke="#f6ecd8" stroke-width=".8"/><path d="M4.6 7.1a1 1 0 0 1 1-1h4l1 1.200h4.500a1 1 0 0 1 1 1v6.800a1 1 0 0 1-1 1h-9.500a1 1 0 0 1-1-1z" fill="#e9d9bd" stroke="#bca67c" stroke-width="1"/><path d="M5.1 8.2h10.500" stroke="#c9b48d" stroke-width="1.200"/><path d="M5.3 9.399999999999999h10" stroke="#f6ecd8" stroke-width=".8"/></svg>
<span class="t " id="t47" style="left:45.0px;top:53.0px;transform:scaleX(0.9991);font-size:17px">This folder already contains a file "New Empty File".</span>
<span class="t " id="t48" style="left:44.9px;top:83.0px;transform:scaleX(0.9409)">Do you want to replace the existing file</span>
<svg style="position:absolute;left:58.4px;top:118.3px;overflow:visible" width="30.4" height="40.5" viewBox="0 0 30 40.500" preserveAspectRatio="none"><path d="M.5.500h23l6 6v33h-29z" fill="#ffffff" stroke="#cfcfcd" stroke-width="1"/><path d="M1 40.300h28.500" stroke="#b9b9b7" stroke-width=".8"/><path d="M23.500 .5v6h6z" fill="#f4f4f4" stroke="#cfcfcd" stroke-width=".8"/><path d="M4 5.50h19" stroke="#c8c8c8" stroke-width=".9"/><path d="M4 7.85h22" stroke="#c8c8c8" stroke-width=".9"/><path d="M4 10.20h22" stroke="#c8c8c8" stroke-width=".9"/><path d="M4 12.55h22" stroke="#c8c8c8" stroke-width=".9"/><path d="M4 14.90h22" stroke="#c8c8c8" stroke-width=".9"/><path d="M4 17.25h22" stroke="#c8c8c8" stroke-width=".9"/><path d="M4 19.60h22" stroke="#c8c8c8" stroke-width=".9"/><path d="M4 21.95h22" stroke="#c8c8c8" stroke-width=".9"/><path d="M4 24.30h22" stroke="#c8c8c8" stroke-width=".9"/><path d="M4 26.65h22" stroke="#c8c8c8" stroke-width=".9"/><path d="M4 29.00h22" stroke="#c8c8c8" stroke-width=".9"/><path d="M4 31.35h22" stroke="#c8c8c8" stroke-width=".9"/><path d="M4 33.70h22" stroke="#c8c8c8" stroke-width=".9"/><path d="M4 36.05h22" stroke="#c8c8c8" stroke-width=".9"/><path d="M4 38.40h14" stroke="#c8c8c8" stroke-width=".9"/></svg>
<span class="t " id="t49" style="left:109.6px;top:119.0px;transform:scaleX(0.9262)">Size: 0 bytes</span>
<span class="t " id="t50" style="left:109.6px;top:139.0px;transform:scaleX(0.9346)">Modified: Today</span>
<span class="t " id="t51" style="left:45.2px;top:175.0px;transform:scaleX(0.9690)">with the following file?</span>
<svg style="position:absolute;left:58.4px;top:210.3px;overflow:visible" width="30.4" height="40.5" viewBox="0 0 30 40.500" preserveAspectRatio="none"><path d="M.5.500h23l6 6v33h-29z" fill="#ffffff" stroke="#cfcfcd" stroke-width="1"/><path d="M1 40.300h28.500" stroke="#b9b9b7" stroke-width=".8"/><path d="M23.500 .5v6h6z" fill="#f4f4f4" stroke="#cfcfcd" stroke-width=".8"/><path d="M4 5.50h19" stroke="#c8c8c8" stroke-width=".9"/><path d="M4 7.85h22" stroke="#c8c8c8" stroke-width=".9"/><path d="M4 10.20h22" stroke="#c8c8c8" stroke-width=".9"/><path d="M4 12.55h22" stroke="#c8c8c8" stroke-width=".9"/><path d="M4 14.90h22" stroke="#c8c8c8" stroke-width=".9"/><path d="M4 17.25h22" stroke="#c8c8c8" stroke-width=".9"/><path d="M4 19.60h22" stroke="#c8c8c8" stroke-width=".9"/><path d="M4 21.95h22" stroke="#c8c8c8" stroke-width=".9"/><path d="M4 24.30h22" stroke="#c8c8c8" stroke-width=".9"/><path d="M4 26.65h22" stroke="#c8c8c8" stroke-width=".9"/><path d="M4 29.00h22" stroke="#c8c8c8" stroke-width=".9"/><path d="M4 31.35h22" stroke="#c8c8c8" stroke-width=".9"/><path d="M4 33.70h22" stroke="#c8c8c8" stroke-width=".9"/><path d="M4 36.05h22" stroke="#c8c8c8" stroke-width=".9"/><path d="M4 38.40h14" stroke="#c8c8c8" stroke-width=".9"/></svg>
<span class="t " id="t52" style="left:109.6px;top:211.0px;transform:scaleX(0.9262)">Size: 0 bytes</span>
<span class="t " id="t53" style="left:109.6px;top:231.0px;transform:scaleX(0.9346)">Modified: Today</span>
<div class="btn" style="left:2px"><span class="t " id="t54" style="left:33.6px;top:6.0px;transform:scaleX(0.8995)">Cancel</span></div>
<div class="btn" style="left:121px"><span class="t " id="t55" style="left:31.7px;top:6.0px;transform:scaleX(0.9480)">Skip All</span></div>
<div class="btn" style="left:240px"><span class="t " id="t56" style="left:41.8px;top:6.0px;transform:scaleX(0.8887)">Skip</span></div>
<div class="btn" style="left:359px"><span class="t " id="t57" style="left:19.5px;top:6.0px;transform:scaleX(0.9336)">Replace All</span></div>
<div class="btn" style="left:478px"><span class="t " id="t58" style="left:29.6px;top:6.0px;transform:scaleX(0.8967)">Replace</span></div>
</div>
</body>
</html>
